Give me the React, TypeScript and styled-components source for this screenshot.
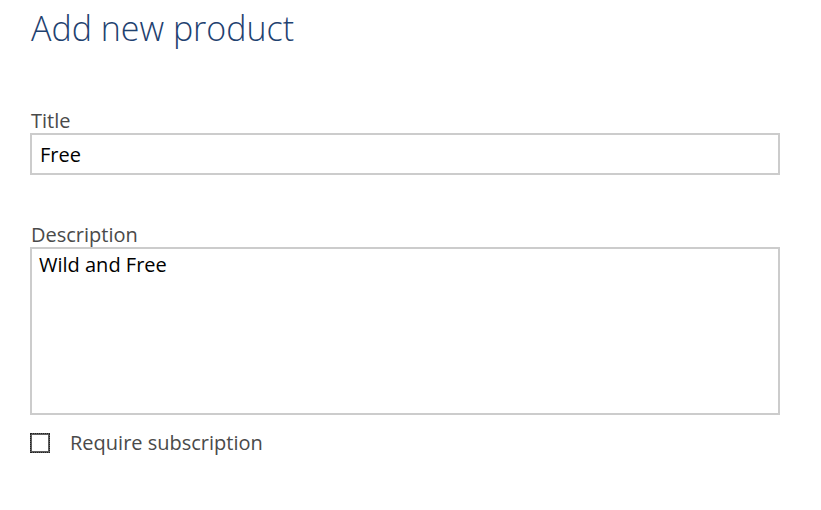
import React from "react"
import styled, { createGlobalStyle } from "styled-components"

const GlobalStyle = createGlobalStyle`
  html, body {
    margin: 0;
    padding: 0;
    background: #ffffff;
  }
  body {
    font-family: "Open Sans", "Noto Sans", "Liberation Sans", sans-serif;
  }
`

const Page = styled.div`
  width: 750px;
  padding: 5px 0 0 30px;
  display: flex;
  flex-direction: column;
`

const Heading = styled.h1`
  margin: 0 0 0 1px;
  font-size: 34px;
  font-weight: 300;
  line-height: 46px;
  color: #1f4270;
`

const Field = styled.div<{ $top: number }>`
  display: flex;
  flex-direction: column;
  margin-top: ${(p) => p.$top}px;
`

const Label = styled.label`
  font-size: 20px;
  line-height: 24px;
  color: #4a4a4a;
  padding-left: 1px;
`

const TextInput = styled.input`
  box-sizing: border-box;
  width: 750px;
  height: 42px;
  margin: 0;
  border: 2px solid #cccccc;
  padding: 0 8px;
  font-family: inherit;
  font-size: 20px;
  color: #000;
  background: #fff;
  outline: none;
`

const TextArea = styled.textarea`
  box-sizing: border-box;
  width: 750px;
  height: 168px;
  margin: 0;
  border: 2px solid #cccccc;
  padding: 3px 7px;
  font-family: inherit;
  font-size: 20px;
  line-height: 26px;
  color: #000;
  background: #fff;
  resize: none;
  outline: none;
`

const CheckRow = styled.label`
  display: flex;
  align-items: center;
  gap: 20px;
  margin-top: 16px;
  font-size: 20px;
  line-height: 24px;
  color: #4a4a4a;
`

const Box = styled.span`
  box-sizing: border-box;
  width: 20px;
  height: 20px;
  border: 2px solid #5e5e5e;
  outline: 1px dotted #222;
  outline-offset: -1px;
  background: #fff;
`

export default function App() {
  return (
    <>
      <GlobalStyle />
      <Page>
        <Heading>Add new product</Heading>
        <Field $top={58}>
          <Label>Title</Label>
          <TextInput defaultValue="Free" />
        </Field>
        <Field $top={48}>
          <Label>Description</Label>
          <TextArea defaultValue="Wild and Free" />
        </Field>
        <CheckRow>
          <Box />
          Require subscription
        </CheckRow>
      </Page>
    </>
  )
}
